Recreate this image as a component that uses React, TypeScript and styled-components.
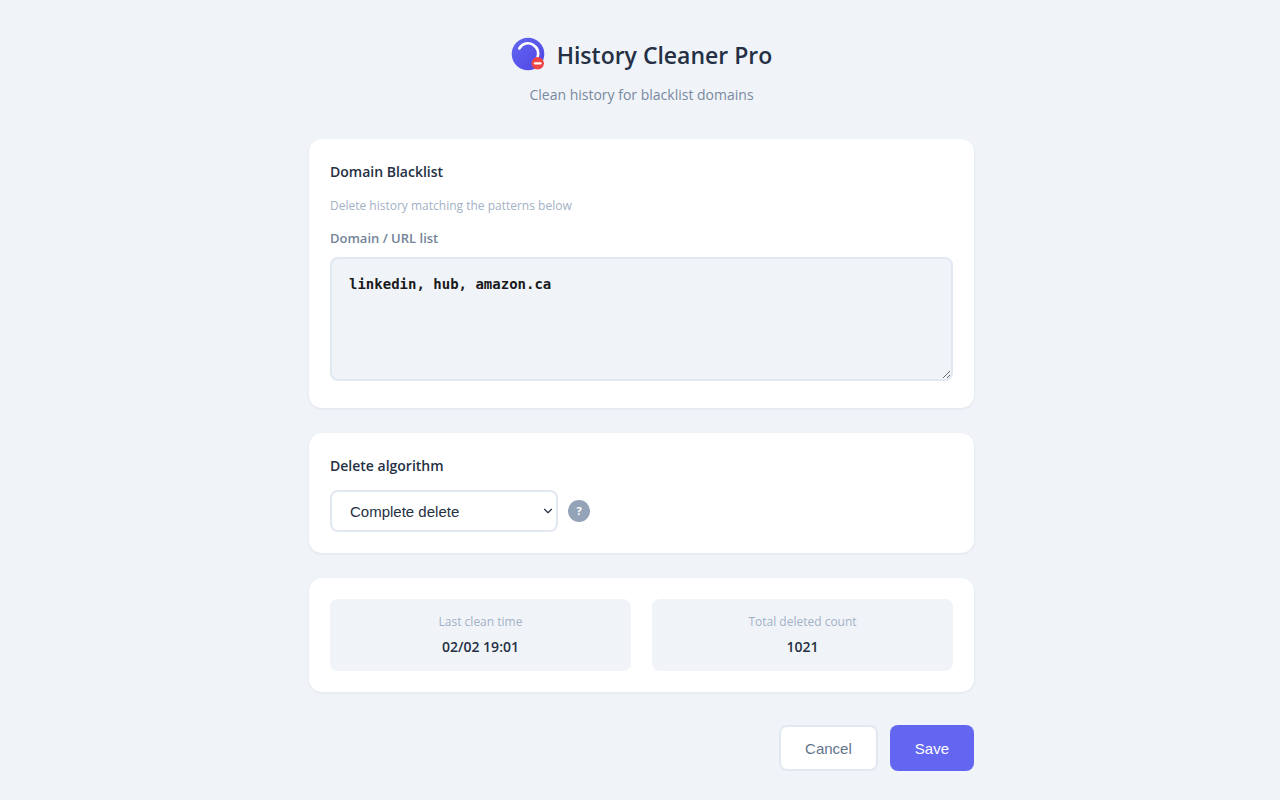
import React, { useState } from "react";
import styled, { createGlobalStyle } from "styled-components";
import { ChevronDown } from "lucide-react";

const sans = '"Open Sans", "Noto Sans", sans-serif';
const arial = '"Liberation Sans", Arial, sans-serif';

const GlobalStyle = createGlobalStyle`
  *, *::before, *::after { box-sizing: border-box; }
  body {
    margin: 0;
    background: #f0f4f9;
    color: #253044;
    font-family: ${sans};
  }
`;

const Page = styled.main`
  width: 100%;
  max-width: 708px;
  margin: 0 auto;
  padding: 34px 20px 28px 23px;
`;

const Header = styled.header`
  display: flex;
  flex-direction: column;
  align-items: center;
  gap: 7px;
  margin-bottom: 32px;
`;

const Brand = styled.div`
  display: flex;
  align-items: flex-start;
  gap: 12px;
`;

const Title = styled.h1`
  margin: 0;
  font-size: 23px;
  line-height: 42px;
  font-weight: 600;
`;

const Subtitle = styled.p`
  margin: 0;
  font-size: 14px;
  line-height: 24px;
  color: #7889a0;
`;

const Card = styled.section`
  margin-bottom: 25px;
  padding: 21px;
  background: #fff;
  border-radius: 13px;
  box-shadow: 0 1px 3px rgba(30, 41, 59, 0.08);
`;

const CardTitle = styled.h2`
  margin: 0 0 12px;
  font-size: 14px;
  line-height: 24px;
  font-weight: 600;
`;

const Hint = styled.p`
  margin: 0 0 10px;
  font-size: 12px;
  line-height: 20px;
  color: #a3b1c6;
`;

const FieldLabel = styled.label`
  display: block;
  margin-bottom: 7px;
  font-size: 13px;
  line-height: 24px;
  font-weight: 600;
  color: #73839a;
`;

const DomainList = styled.textarea`
  display: block;
  width: 100%;
  height: 124px;
  margin-bottom: 6px;
  padding: 15px 17px;
  border: 2px solid #e2e8f1;
  border-radius: 8px;
  background: #f0f4f9;
  color: #1a1a1a;
  font: 700 14px/20px "DejaVu Sans Mono", monospace;
  resize: vertical;
`;

const SelectRow = styled.div`
  display: flex;
  align-items: center;
  gap: 10px;
`;

const SelectBox = styled.div`
  position: relative;
  width: 228px;

  svg {
    position: absolute;
    top: 14px;
    right: 3px;
    color: #253044;
    pointer-events: none;
  }
`;

const Select = styled.select`
  display: block;
  width: 100%;
  height: 42px;
  padding: 0 18px;
  appearance: none;
  border: 2px solid #e2e8f1;
  border-radius: 8px;
  background: #fff;
  color: #253044;
  font: 15px ${arial};
`;

const HelpButton = styled.button`
  width: 22px;
  height: 22px;
  padding: 0;
  border: 0;
  border-radius: 50%;
  background: #94a3b8;
  color: #fff;
  font: 700 11px/22px ${sans};
`;

const Stats = styled.div`
  display: grid;
  grid-template-columns: 1fr 1fr;
  gap: 21px;
`;

const Stat = styled.div`
  padding: 12px;
  border-radius: 8px;
  background: #f0f4f9;
  text-align: center;
`;

const StatLabel = styled.div`
  margin-bottom: 2px;
  font-size: 12px;
  line-height: 22px;
  color: #a3b1c6;
`;

const StatValue = styled.div`
  font-size: 14px;
  line-height: 24px;
  font-weight: 600;
`;

const Actions = styled.div`
  display: flex;
  justify-content: flex-end;
  gap: 12px;
  padding-top: 8px;
`;

const Button = styled.button<{ $primary?: boolean }>`
  height: 46px;
  padding: 0 ${(p) => (p.$primary ? 25 : 24)}px;
  border: ${(p) => (p.$primary ? "0" : "2px solid #e2e8f1")};
  border-radius: 8px;
  background: ${(p) => (p.$primary ? "#6366f1" : "#fff")};
  color: ${(p) => (p.$primary ? "#fff" : "#64748b")};
  font: 15px ${arial};
`;

const Logo = () => (
  <svg width="34" height="40" viewBox="0 0 34 40" aria-hidden="true">
    <defs>
      <linearGradient id="disc" x1="0" y1="0" x2="1" y2="1">
        <stop offset="0" stopColor="#6366f1" />
        <stop offset="1" stopColor="#4f46e5" />
      </linearGradient>
    </defs>
    <circle cx="17" cy="20" r="16.3" fill="url(#disc)" />
    <path
      d="M8.3 14.5C11.3 9.3 17.5 7.8 22.2 10.8C26.4 13.5 28.2 18.5 26.4 24"
      fill="none"
      stroke="#fff"
      strokeWidth="2.6"
      strokeLinecap="round"
    />
    <circle cx="26.7" cy="29.3" r="6.2" fill="#ef4444" />
    <path d="M23.8 29.3H29.6" stroke="#fff" strokeWidth="2.2" strokeLinecap="round" />
  </svg>
);

export default function App() {
  const [domains, setDomains] = useState("linkedin, hub, amazon.ca");
  return (
    <>
      <GlobalStyle />
      <Page>
        <Header>
          <Brand>
            <Logo />
            <Title>History Cleaner Pro</Title>
          </Brand>
          <Subtitle>Clean history for blacklist domains</Subtitle>
        </Header>
        <Card>
          <CardTitle>Domain Blacklist</CardTitle>
          <Hint>Delete history matching the patterns below</Hint>
          <FieldLabel htmlFor="domains">Domain / URL list</FieldLabel>
          <DomainList
            id="domains"
            spellCheck={false}
            value={domains}
            onChange={(e) => setDomains(e.target.value)}
          />
        </Card>
        <Card>
          <CardTitle id="algorithm-title">Delete algorithm</CardTitle>
          <SelectRow>
            <SelectBox>
              <Select aria-labelledby="algorithm-title">
                <option>Complete delete</option>
              </Select>
              <ChevronDown size={14} strokeWidth={2} />
            </SelectBox>
            <HelpButton type="button">?</HelpButton>
          </SelectRow>
        </Card>
        <Card>
          <Stats>
            <Stat>
              <StatLabel>Last clean time</StatLabel>
              <StatValue>02/02 19:01</StatValue>
            </Stat>
            <Stat>
              <StatLabel>Total deleted count</StatLabel>
              <StatValue>1021</StatValue>
            </Stat>
          </Stats>
        </Card>
        <Actions>
          <Button type="button">Cancel</Button>
          <Button type="button" $primary>Save</Button>
        </Actions>
      </Page>
    </>
  );
}
